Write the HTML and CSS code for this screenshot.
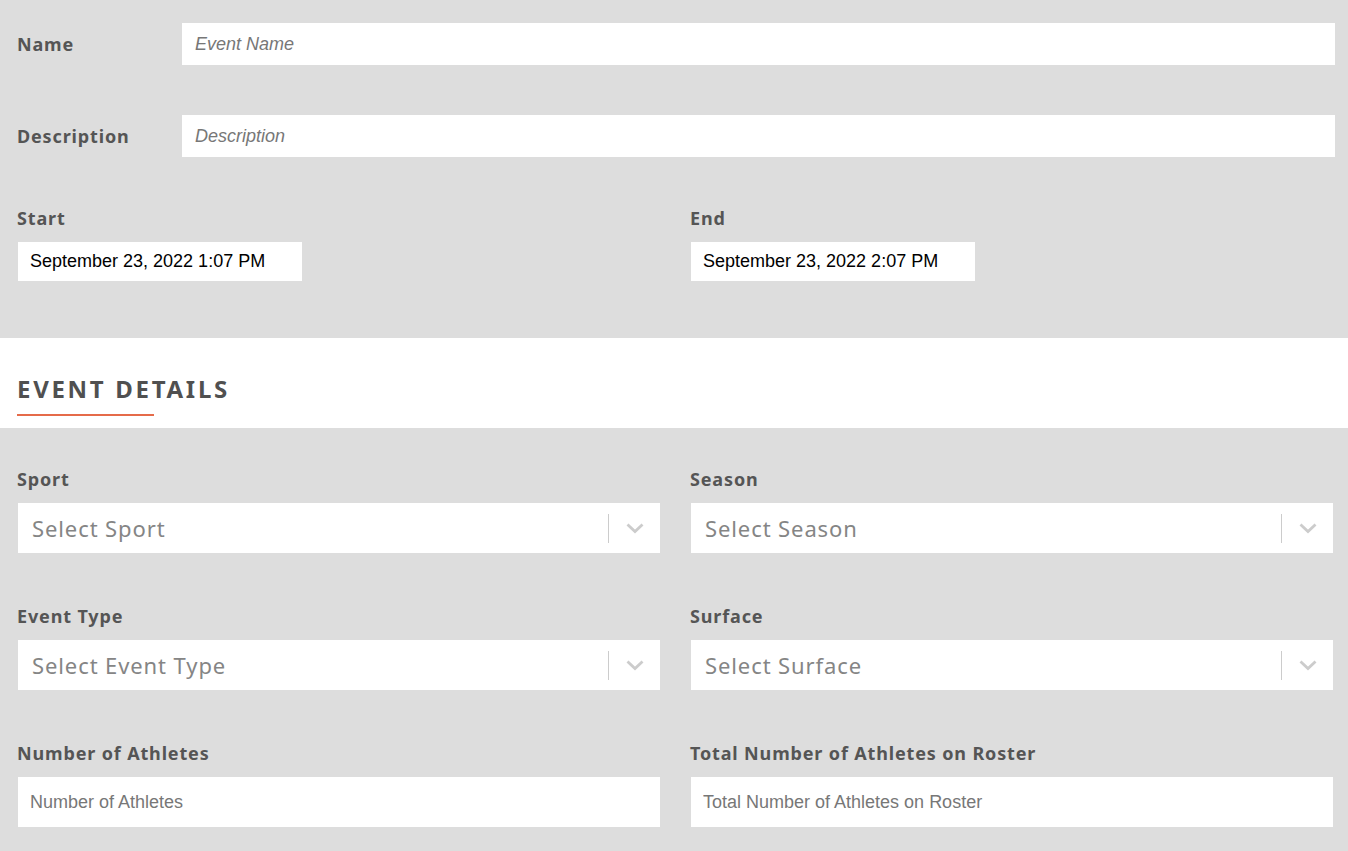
FILE: index.html
```html
<!DOCTYPE html>
<html lang="en">
<head>
    <meta charset="UTF-8">
    <title>Create Event</title>
    <link rel="stylesheet" href="styles.css">
</head>
<body>

<div class="section general">
    <div class="inline-row">
        <label for="name">Name</label>
        <input type="text" id="name" class="text-input italic" placeholder="Event Name">
    </div>

    <div class="inline-row">
        <label for="description">Description</label>
        <input type="text" id="description" class="text-input italic" placeholder="Description">
    </div>

    <div class="grid">
        <div class="field">
            <label for="start">Start</label>
            <input type="text" id="start" class="date-input" value="September 23, 2022 1:07 PM">
        </div>
        <div class="field">
            <label for="end">End</label>
            <input type="text" id="end" class="date-input" value="September 23, 2022 2:07 PM">
        </div>
    </div>
</div>

<div class="section-title">
    <h2>Event Details</h2>
</div>

<div class="section details">
    <div class="grid">
        <div class="field">
            <label>Sport</label>
            <div class="select">
                <span class="select-value">Select Sport</span>
                <span class="select-sep"></span>
                <span class="select-arrow">
                    <svg width="20" height="20" viewBox="0 0 20 20"><path d="M2.5 6.5 L10 13.5 L17.5 6.5" fill="none" stroke="#ccc" stroke-width="2.8"/></svg>
                </span>
            </div>
        </div>
        <div class="field">
            <label>Season</label>
            <div class="select">
                <span class="select-value">Select Season</span>
                <span class="select-sep"></span>
                <span class="select-arrow">
                    <svg width="20" height="20" viewBox="0 0 20 20"><path d="M2.5 6.5 L10 13.5 L17.5 6.5" fill="none" stroke="#ccc" stroke-width="2.8"/></svg>
                </span>
            </div>
        </div>

        <div class="field">
            <label>Event Type</label>
            <div class="select">
                <span class="select-value">Select Event Type</span>
                <span class="select-sep"></span>
                <span class="select-arrow">
                    <svg width="20" height="20" viewBox="0 0 20 20"><path d="M2.5 6.5 L10 13.5 L17.5 6.5" fill="none" stroke="#ccc" stroke-width="2.8"/></svg>
                </span>
            </div>
        </div>
        <div class="field">
            <label>Surface</label>
            <div class="select">
                <span class="select-value">Select Surface</span>
                <span class="select-sep"></span>
                <span class="select-arrow">
                    <svg width="20" height="20" viewBox="0 0 20 20"><path d="M2.5 6.5 L10 13.5 L17.5 6.5" fill="none" stroke="#ccc" stroke-width="2.8"/></svg>
                </span>
            </div>
        </div>

        <div class="field">
            <label for="athletes">Number of Athletes</label>
            <input type="number" id="athletes" class="number-input" placeholder="Number of Athletes">
        </div>
        <div class="field">
            <label for="roster">Total Number of Athletes on Roster</label>
            <input type="number" id="roster" class="number-input" placeholder="Total Number of Athletes on Roster">
        </div>
    </div>
</div>

</body>
</html>
```

FILE: styles.css
```css
* {
    box-sizing: border-box;
}

body {
    margin: 0;
    background-color: #dddddd;
    font-family: 'Noto Sans', sans-serif;
    color: #555;
}

label {
    display: block;
    font-size: 18px;
    line-height: 22px;
    font-weight: bold;
    letter-spacing: 0.85px;
    color: #555;
}

input {
    font-family: 'Liberation Sans', Arial, sans-serif;
    font-size: 18px;
    outline: none;
    margin: 0;
}

input::placeholder {
    color: #777;
}

.section {
    background-color: #dddddd;
}

.general {
    padding: 23px 13px 56px 17px;
}

.details {
    padding: 40px 14px 30px 17px;
}

.inline-row {
    display: flex;
    align-items: center;
    margin-bottom: 50px;
}

.inline-row label {
    width: 165px;
    flex-shrink: 0;
}

.text-input {
    flex: 1;
    height: 42px;
    border: none;
    background: #fff;
    padding: 0 13px;
}

.italic {
    font-style: italic;
}

.general .grid {
    margin: 3px 1px 0 0;
}

.grid {
    display: grid;
    grid-template-columns: 1fr 1fr;
    column-gap: 29px;
    row-gap: 51px;
}

.field label {
    margin-bottom: 12px;
}

.date-input {
    width: 286px;
    height: 41px;
    border: 1px solid #dddddd;
    background: #fff;
    padding: 0 12px;
    color: #000;
}

.section-title {
    background-color: #fff;
    padding: 37px 17px 12px;
}

.section-title h2 {
    margin: 0;
    font-size: 24px;
    line-height: 28px;
    font-weight: bold;
    letter-spacing: 2.7px;
    text-transform: uppercase;
    color: #505050;
    display: inline-block;
}

.section-title h2::after {
    content: "";
    display: block;
    width: 137px;
    height: 2px;
    margin-top: 11px;
    background-color: #e56b4a;
}

.select {
    display: flex;
    align-items: center;
    height: 52px;
    background: #fff;
    border: 1px solid #dddddd;
}

.select-value {
    flex: 1;
    padding-left: 14px;
    font-size: 22px;
    letter-spacing: 0.9px;
    color: #858585;
}

.select-sep {
    width: 1px;
    height: 29px;
    background-color: #ccc;
}

.select-arrow {
    width: 51px;
    display: flex;
    justify-content: center;
    align-items: center;
}

.number-input {
    width: 100%;
    height: 52px;
    border: 1px solid #dddddd;
    background: #fff;
    padding: 0 12px;
    color: #333;
}

.number-input::-webkit-outer-spin-button,
.number-input::-webkit-inner-spin-button {
    -webkit-appearance: none;
}
```
